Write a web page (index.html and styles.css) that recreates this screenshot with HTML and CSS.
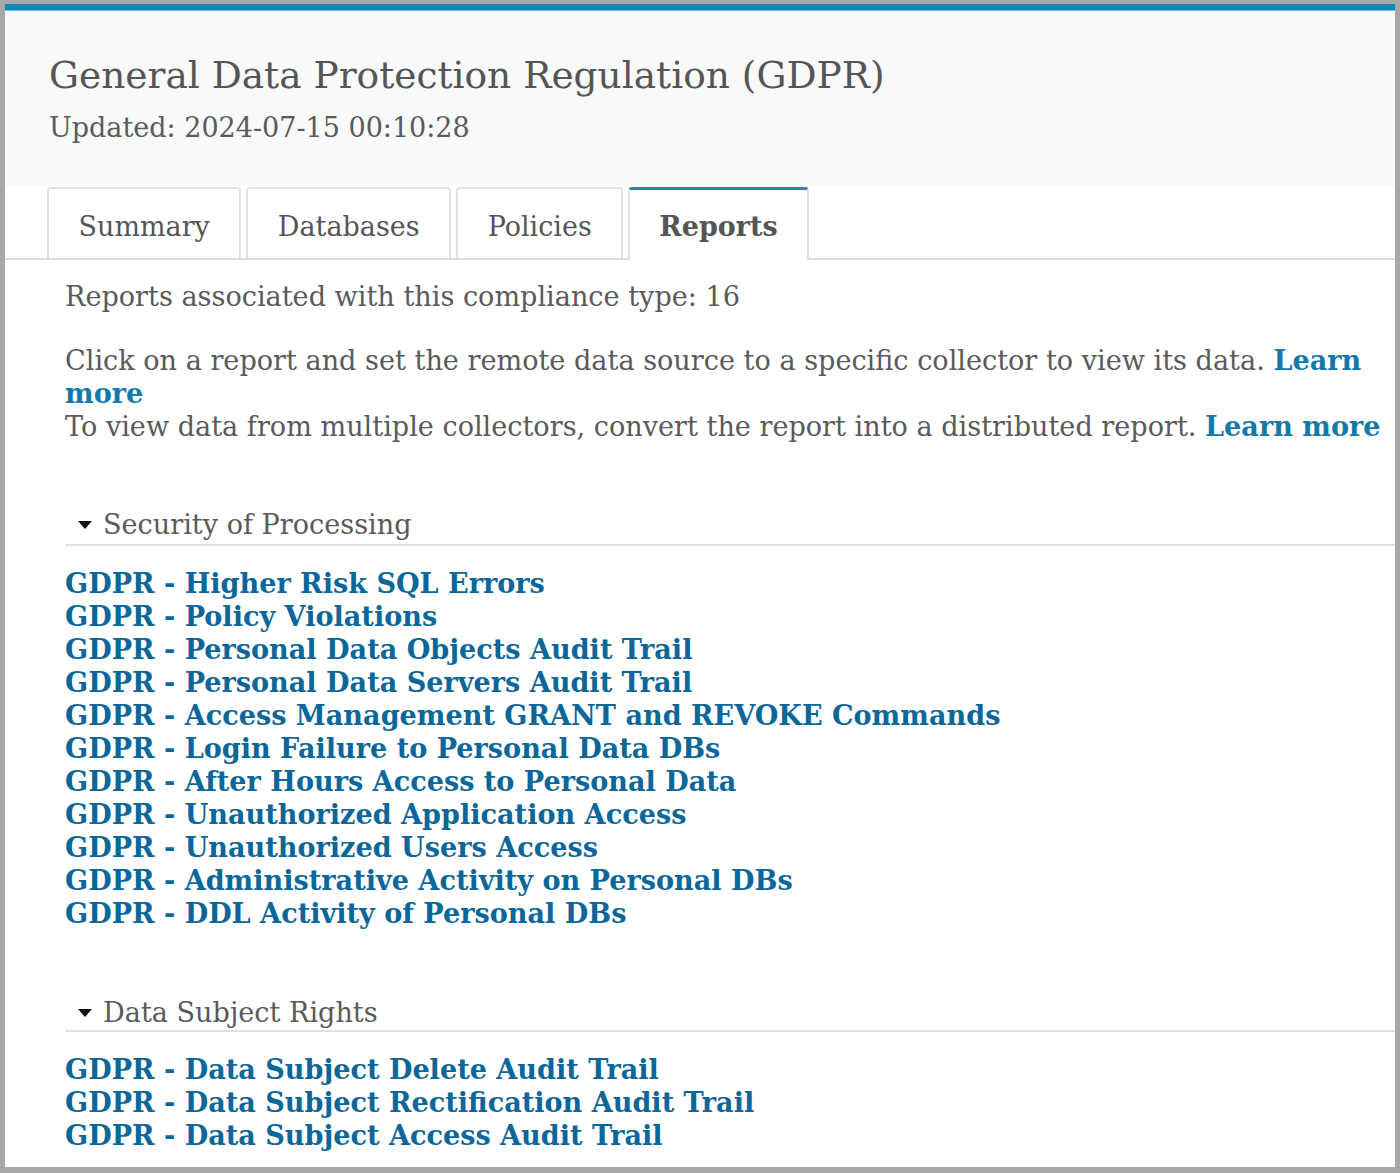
FILE: index.html
```html
<!DOCTYPE html>
<html>
<head>
<meta charset="utf-8">
<link rel="stylesheet" href="styles.css">
</head>
<body>
<div class="frame">
  <div class="page">
    <header class="head">
      <h1 class="title">General Data Protection Regulation (GDPR)</h1>
      <div class="updated">Updated: 2024-07-15 00:10:28</div>
    </header>
    <nav class="tabs">
      <div class="tab">Summary</div>
      <div class="tab">Databases</div>
      <div class="tab">Policies</div>
      <div class="tab active">Reports</div>
    </nav>
    <main class="content">
      <p class="count">Reports associated with this compliance type: 16</p>
      <p class="info">Click on a report and set the remote data source to a specific collector to view its data. <a class="learn">Learn more</a><br>To view data from multiple collectors, convert the report into a distributed report. <a class="learn">Learn more</a></p>

      <section class="group">
        <div class="group-head"><span class="caret"></span>Security of Processing</div>
        <ul class="reports">
          <li><a>GDPR - Higher Risk SQL Errors</a></li>
          <li><a>GDPR - Policy Violations</a></li>
          <li><a>GDPR - Personal Data Objects Audit Trail</a></li>
          <li><a>GDPR - Personal Data Servers Audit Trail</a></li>
          <li><a>GDPR - Access Management GRANT and REVOKE Commands</a></li>
          <li><a>GDPR - Login Failure to Personal Data DBs</a></li>
          <li><a>GDPR - After Hours Access to Personal Data</a></li>
          <li><a>GDPR - Unauthorized Application Access</a></li>
          <li><a>GDPR - Unauthorized Users Access</a></li>
          <li><a>GDPR - Administrative Activity on Personal DBs</a></li>
          <li><a>GDPR - DDL Activity of Personal DBs</a></li>
        </ul>
      </section>

      <section class="group second">
        <div class="group-head"><span class="caret"></span>Data Subject Rights</div>
        <ul class="reports">
          <li><a>GDPR - Data Subject Delete Audit Trail</a></li>
          <li><a>GDPR - Data Subject Rectification Audit Trail</a></li>
          <li><a>GDPR - Data Subject Access Audit Trail</a></li>
        </ul>
      </section>
    </main>
  </div>
</div>
</body>
</html>
```

FILE: styles.css
```css
html, body {
  margin: 0;
  padding: 0;
  background: #a8a8a8;
}
body {
  font-family: "DejaVu Serif", serif;
  color: #5a5a5a;
}
.frame {
  padding: 4px 5px 6px 5px;
  height: 1173px;
  box-sizing: border-box;
}
.page {
  background: #fff;
  height: 100%;
  border-top: 6px solid #1784b6;
  box-sizing: border-box;
  overflow: hidden;
}
.head {
  background: #f8f9f9;
  padding: 40px 44px 40px 44px;
  border-top: 1px solid #6cc0e3;
}
.title {
  margin: 0;
  font-weight: normal;
  font-size: 37.5px;
  line-height: 48px;
  color: #555;
}
.updated {
  font-size: 27px;
  line-height: 36px;
  margin-top: 11px;
  color: #5a5a5a;
}
.tabs {
  display: flex;
  gap: 5px;
  margin-top: 1px;
  padding-left: 42px;
  border-bottom: 2px solid #dcdcdc;
  background: #fff;
}
.tab {
  border: 2px solid #e2e2e2;
  border-bottom: none;
  border-radius: 4px 4px 0 0;
  padding: 7px 29.5px 0 29.5px;
  line-height: 62px;
  font-size: 27px;
  color: #555;
  background: #fff;
}
.tab.active {
  border-top: 3px solid #168bc0;
  padding-top: 6px;
  padding-right: 29px;
  padding-left: 29px;
  font-weight: bold;
  margin-bottom: -2px;
  padding-bottom: 2px;
}
.content {
  padding: 20px 0 0 60px;
  font-size: 27.1px;
  line-height: 33px;
}
.content p {
  margin: 0;
}
.count {
  margin-bottom: 31px !important;
}
.learn {
  color: #1279aa;
  font-weight: bold;
}
.group {
  margin-top: 65px;
}
.group.second {
  margin-top: 66px;
}
.group-head {
  border-bottom: 2px solid #e0e0e0;
  padding: 0 0 3px 13px;
  line-height: 33px;
  color: #5a5a5a;
  display: flex;
  align-items: center;
}
.second .group-head {
  padding-bottom: 1px;
}
.caret {
  width: 0;
  height: 0;
  border-left: 7px solid transparent;
  border-right: 7px solid transparent;
  border-top: 8px solid #111;
  margin-right: 11px;
}
.reports {
  list-style: none;
  margin: 21px 0 0 0;
  padding: 0;
}
.reports li {
  line-height: 33px;
}
.reports a {
  color: #0b6699;
  font-weight: bold;
}
```
